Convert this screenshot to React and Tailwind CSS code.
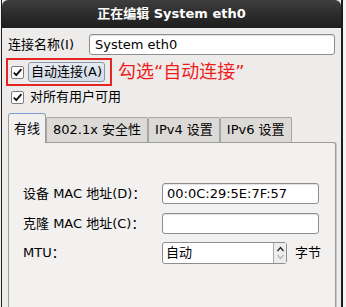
import React from 'react'

// GTK-style "editing connection" dialog with a red annotation

const FONT = { fontFamily: '"DejaVu Sans", "Noto Sans CJK SC", sans-serif' }

function CheckBox() {
  return (
    <span className="flex h-[13px] w-[13px] shrink-0 items-center justify-center rounded-[2px] border border-[#7c7c7c] bg-white">
      <svg width="11" height="11" viewBox="0 0 11 11">
        <path d="M1.8 5.6 L4.3 8.2 L9.4 2.2" fill="none" stroke="#111" strokeWidth="1.8" />
      </svg>
    </span>
  )
}

function Field({ value = '', className = '' }) {
  return (
    <div className={`flex h-[21px] items-center rounded-[3px] border border-[#8e8e8e] bg-white pl-[4px] text-[13px] text-black shadow-[inset_0_1px_1px_rgba(0,0,0,0.12)] ${className}`}>
      {value}
    </div>
  )
}

function Tab({ label, active }) {
  if (active) {
    return (
      <div className="relative z-10 -mb-px flex h-[30px] items-center rounded-t-[3px] border border-b-0 border-[#9c9c9c] border-t-[#7d9ccc] bg-[#f2f1f0] px-[5px] text-[13px]">
        {label}
      </div>
    )
  }
  return (
    <div className="flex h-[25px] items-center rounded-t-[2px] border border-b-0 border-[#a6a6a6] bg-[#dcdad6] px-[6px] text-[13px]">
      {label}
    </div>
  )
}

export default function App() {
  return (
    <div className="flex h-[307px] w-[346px] overflow-hidden bg-[#f3f3f3] text-black" style={FONT}>
      {/* dialog window */}
      <div className="ml-px flex w-[342px] flex-col border-l border-r-2 border-[#1c1c1c] bg-[#edeceb]">
        {/* title bar */}
        <div className="flex h-[28px] shrink-0 items-center justify-center rounded-t-[6px] bg-gradient-to-b from-[#3e3e3e] to-[#1d1d1d] text-[13px] font-bold text-white">
          正在编辑 System eth0
        </div>

        <div className="flex flex-col pl-[6px] pr-[6px] pt-[6px]">
          {/* connection name */}
          <div className="flex h-[21px] items-center">
            <span className="w-[81px] text-[13px]">连接名称(I)</span>
            <Field value="System eth0" className="flex-1 pl-[5px]" />
          </div>

          {/* auto connect, highlighted */}
          <div className="mt-[3px] flex items-center">
            <div className="-ml-[2px] flex h-[28px] w-[106px] items-center gap-[4px] border-2 border-[#e52424] pl-[3px]">
              <CheckBox />
              <span className="flex h-[20px] items-center rounded-[3px] border border-[#8c96a4] bg-gradient-to-b from-[#e6ebf2] to-[#d3dbe6] px-[2px] text-[13px]">
                自动连接(A)
              </span>
            </div>
            <span className="ml-[6px] text-[18px] leading-none text-[#f01c1c]">勾选“自动连接”</span>
          </div>

          {/* all users */}
          <div className="mt-[4px] flex h-[14px] items-center gap-[6px] pl-[3px]">
            <CheckBox />
            <span className="text-[13px]">对所有用户可用</span>
          </div>

          {/* tabs */}
          <div className="mt-[9px] flex items-end pl-[0px]">
            <Tab label="有线" active />
            <Tab label="802.1x 安全性" />
            <Tab label="IPv4 设置" />
            <Tab label="IPv6 设置" />
          </div>

          {/* tab panel */}
          <div className="mr-[-1px] flex h-[170px] flex-col rounded-tr-[3px] border border-[#9c9c9c] border-b-0 bg-[#f2f1f0] pl-[14px] pt-[40px] shadow-[1px_0_0_#c8c7c5]">
            <div className="flex h-[21px] items-center">
              <span className="w-[139px] text-[13px]">设备 MAC 地址(D)：</span>
              <Field value="00:0C:29:5E:7F:57" className="w-[157px]" />
            </div>
            <div className="mt-[9px] flex h-[21px] items-center">
              <span className="w-[139px] text-[13px]">克隆 MAC 地址(C)：</span>
              <Field className="w-[157px]" />
            </div>
            <div className="mt-[8px] flex h-[22px] items-center">
              <span className="w-[139px] text-[13px]">MTU：</span>
              <div className="flex h-[22px] w-[125px] rounded-[3px] border border-[#8e8e8e] bg-white">
                <span className="flex flex-1 items-center pl-[3px] text-[13px]">自动</span>
                <span className="flex w-[13px] flex-col items-center justify-center border-l border-[#a8a8a8] bg-[#eeedec]">
                  <svg width="9" height="18" viewBox="0 0 9 18">
                    <path d="M1.5 7 L4.5 3.5 L7.5 7" fill="none" stroke="#222" strokeWidth="1.3" />
                    <path d="M1.5 11 L4.5 14.5 L7.5 11" fill="none" stroke="#b4b4b4" strokeWidth="1.3" />
                  </svg>
                </span>
              </div>
              <span className="ml-[8px] text-[13px]">字节</span>
            </div>
          </div>
        </div>
      </div>
    </div>
  )
}
